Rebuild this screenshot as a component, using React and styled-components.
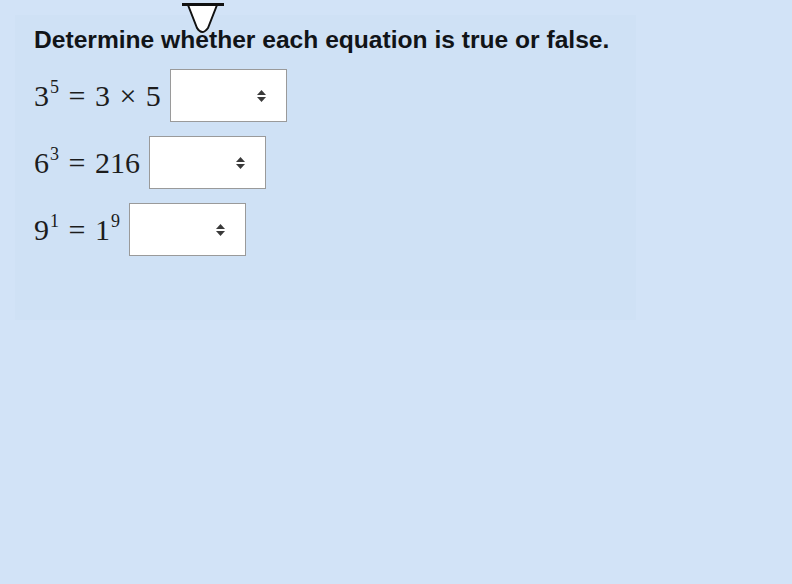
import React from 'react';
import styled, { createGlobalStyle } from 'styled-components';

const GlobalStyle = createGlobalStyle`
  html, body {
    margin: 0;
    padding: 0;
    background: #d2e3f7;
  }
  body {
    width: 792px;
    height: 584px;
    overflow: hidden;
    position: relative;
  }
`;

const rows = [
  { base: '3', exp: '5', rhs: [{ text: '3' }, { op: '×' }, { text: '5' }] },
  { base: '6', exp: '3', rhs: [{ text: '216' }] },
  { base: '9', exp: '1', rhs: [{ text: '1', exp: '9' }] },
];

const Funnel = () => (
  <FunnelWrap>
    <svg width="46" height="38" viewBox="0 0 46 38">
      <path
        d="M7 5 L16 28 Q21 36 27 28 L36 5 Z"
        fill="#fff"
        stroke="#111"
        strokeWidth="2"
        strokeLinejoin="round"
      />
      <line x1="1" y1="4.5" x2="43" y2="4.5" stroke="#111" strokeWidth="3" />
    </svg>
  </FunnelWrap>
);

const Arrows = () => (
  <svg width="11" height="16" viewBox="0 0 11 16">
    <path d="M1 7 L5.5 2 L10 7 Z" fill="#3a3a3a" />
    <path d="M1 9 L5.5 14 L10 9 Z" fill="#3a3a3a" />
  </svg>
);

const App = () => (
  <>
    <GlobalStyle />
    <Panel>
      <Heading>Determine whether each equation is true or false.</Heading>
      <List>
        {rows.map((row, i) => (
          <Row key={i}>
            <Expr>
              <Num>{row.base}</Num>
              <Sup>{row.exp}</Sup>
              <Op>=</Op>
              {row.rhs.map((part, j) =>
                part.op ? (
                  <Op key={j}>{part.op}</Op>
                ) : (
                  <React.Fragment key={j}>
                    <Num>{part.text}</Num>
                    {part.exp && <Sup>{part.exp}</Sup>}
                  </React.Fragment>
                )
              )}
            </Expr>
            <SelectBox>
              <Select defaultValue="">
                <option value=""></option>
                <option value="true">True</option>
                <option value="false">False</option>
              </Select>
              <ArrowSlot>
                <Arrows />
              </ArrowSlot>
            </SelectBox>
          </Row>
        ))}
      </List>
    </Panel>
    <Funnel />
  </>
);

export default App;

const Panel = styled.div`
  margin: 15px 0 0 15px;
  width: 621px;
  height: 305px;
  box-sizing: border-box;
  padding: 10px 0 0 19px;
  background: #cfe1f5;
`;

const Heading = styled.h1`
  margin: 0;
  font-family: 'Liberation Sans', Arial, sans-serif;
  font-weight: 700;
  font-size: 24.6px;
  line-height: 30px;
  color: #111418;
`;

const List = styled.div`
  display: flex;
  flex-direction: column;
  gap: 14px;
  margin-top: 14px;
`;

const Row = styled.div`
  display: flex;
  align-items: center;
  gap: 9px;
  height: 53px;
`;

const Expr = styled.span`
  font-family: 'Liberation Serif', 'Times New Roman', serif;
  font-size: 30px;
  color: #1c1c1c;
  white-space: nowrap;
  line-height: 1;
`;

const Num = styled.span``;

const Sup = styled.sup`
  font-size: 18px;
  vertical-align: 0;
  position: relative;
  top: -13px;
  margin-left: 1px;
`;

const Op = styled.span`
  margin: 0 9.5px;
`;

const SelectBox = styled.div`
  position: relative;
  width: 117px;
  height: 53px;
`;

const Select = styled.select`
  appearance: none;
  width: 100%;
  height: 100%;
  box-sizing: border-box;
  margin: 0;
  border: 1.5px solid #9a9a9a;
  border-radius: 0;
  background: #fff;
  font-family: 'Liberation Sans', Arial, sans-serif;
  font-size: 16px;
  padding: 0 10px;
  color: #222;
`;

const ArrowSlot = styled.span`
  position: absolute;
  right: 20px;
  top: 50%;
  transform: translateY(-50%);
  display: flex;
  pointer-events: none;
`;

const FunnelWrap = styled.div`
  position: absolute;
  left: 181px;
  top: 0;
  line-height: 0;
`;
